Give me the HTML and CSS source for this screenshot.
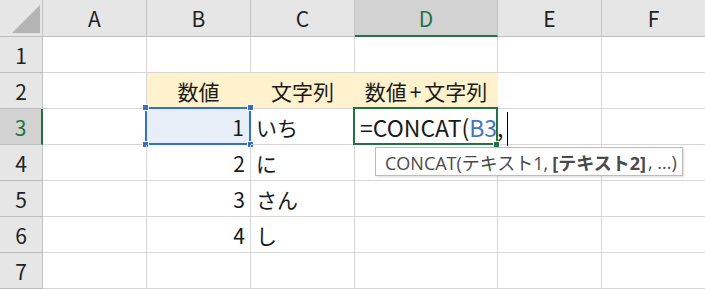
FILE: index.html
```html
<!DOCTYPE html>
<html lang="ja">
<head>
  <meta charset="UTF-8" />
  <title>CONCAT</title>
  <link rel="stylesheet" href="styles.css">
</head>
<body>
  <div class="sheet">
    <div class="corner"><span class="corner-mark"></span></div>
    <div class="col-head">A</div>
    <div class="col-head">B</div>
    <div class="col-head">C</div>
    <div class="col-head active">D</div>
    <div class="col-head">E</div>
    <div class="col-head">F</div>

    <div class="row-head">1</div>
    <div class="cell"></div><div class="cell"></div><div class="cell"></div><div class="cell"></div><div class="cell"></div><div class="cell"></div>

    <div class="row-head">2</div>
    <div class="cell"></div>
    <div class="cell fill center">数値</div>
    <div class="cell fill center">文字列</div>
    <div class="cell fill center">数値<span class="plus">+</span>文字列</div>
    <div class="cell"></div><div class="cell"></div>

    <div class="row-head active">3</div>
    <div class="cell"></div>
    <div class="cell num ref">1<span class="ref-box"><i class="h tl"></i><i class="h tr"></i><i class="h bl"></i><i class="h br"></i></span></div>
    <div class="cell">いち</div>
    <div class="cell editing">
      <span class="formula">=CONCAT(<span class="ref-text">B3</span>,</span><span class="caret"></span>
      <span class="edit-box"><i class="fill-handle"></i></span>
    </div>
    <div class="cell"></div><div class="cell"></div>

    <div class="row-head">4</div>
    <div class="cell"></div><div class="cell num">2</div><div class="cell">に</div><div class="cell"></div><div class="cell"></div><div class="cell"></div>

    <div class="row-head">5</div>
    <div class="cell"></div><div class="cell num">3</div><div class="cell">さん</div><div class="cell"></div><div class="cell"></div><div class="cell"></div>

    <div class="row-head">6</div>
    <div class="cell"></div><div class="cell num">4</div><div class="cell">し</div><div class="cell"></div><div class="cell"></div><div class="cell"></div>

    <div class="row-head">7</div>
    <div class="cell"></div><div class="cell"></div><div class="cell"></div><div class="cell"></div><div class="cell"></div><div class="cell"></div>

    <div class="tip">CONCAT(テキスト1, <b>[テキスト2]</b>, ...)</div>
  </div>
</body>
</html>
```

FILE: styles.css
```css
* {
  margin: 0;
  padding: 0;
  box-sizing: border-box;
}

body {
  width: 705px;
  height: 289px;
  overflow: hidden;
  background: #ffffff;
  font-family: "Noto Sans CJK JP", "Noto Sans", sans-serif;
  color: #1a1a1a;
}

.sheet {
  position: relative;
  display: grid;
  grid-template-columns: 43px 104px 104px 104px 143px 104px 104px;
  grid-template-rows: 37px repeat(7, 36px);
}

.corner,
.col-head,
.row-head {
  background: #e6e6e6;
  border-right: 1px solid #c4c4c4;
  border-bottom: 1px solid #bdbdbd;
  display: flex;
  align-items: center;
  justify-content: center;
  font-size: 21px;
  color: #222;
}

.corner {
  position: relative;
}

.corner-mark {
  position: absolute;
  left: 12px;
  top: 5px;
  width: 28px;
  height: 28px;
  background: #b4b4b4;
  clip-path: polygon(100% 0, 100% 100%, 0 100%);
}

.col-head.active {
  background: #d2d2d2;
  color: #217346;
  border-bottom: 2px solid #217346;
}

.row-head.active {
  background: #d2d2d2;
  color: #217346;
  border-right: 2px solid #217346;
}

.cell {
  position: relative;
  border-right: 1px solid #d6d6d6;
  border-bottom: 1px solid #d6d6d6;
  display: flex;
  align-items: center;
  padding: 0 5px;
  font-size: 21px;
  white-space: nowrap;
}

.cell.center {
  justify-content: center;
}

.cell.num {
  justify-content: flex-end;
}

.cell.fill {
  background: #fff2cc;
  border-right-color: #fff2cc;
}

.plus {
  margin: 0 3px;
}

.cell.ref {
  background: #e8eef8;
  padding-right: 6px;
}

.ref-box {
  position: absolute;
  left: -2px;
  top: -2px;
  right: -1px;
  bottom: -1px;
  border: 2px solid #3370c8;
}

.h {
  position: absolute;
  width: 7px;
  height: 7px;
  background: #3370c8;
  border: 1px solid #ffffff;
}

.h.tl { left: -5px; top: -5px; }
.h.tr { right: -5px; top: -5px; }
.h.bl { left: -5px; bottom: -5px; }
.h.br { right: -5px; bottom: -5px; }

.cell.editing {
  overflow: visible;
  z-index: 2;
  padding-left: 5px;
}

.formula {
  flex-shrink: 0;
  font-size: 23px;
}

.ref-text {
  color: #4472c4;
}

.caret {
  flex-shrink: 0;
  display: block;
  width: 1px;
  height: 34px;
  margin: 4px 0 0 3px;
  background: #000;
}

.edit-box {
  position: absolute;
  left: -2px;
  top: -2px;
  right: -1px;
  bottom: -1px;
  border: 2px solid #217346;
  pointer-events: none;
}

.fill-handle {
  position: absolute;
  right: -4px;
  bottom: -5px;
  width: 7px;
  height: 7px;
  background: #217346;
  border: 1px solid #ffffff;
}

.tip {
  position: absolute;
  left: 375px;
  top: 147px;
  width: 308px;
  height: 29px;
  padding-left: 9px;
  display: flex;
  align-items: center;
  background: #ffffff;
  border: 1px solid #bcbcbc;
  box-shadow: 1px 1px 2px rgba(0, 0, 0, 0.15);
  font-family: "Open Sans", "Noto Sans CJK JP", sans-serif;
  font-size: 18px;
  color: #4a4a4a;
  white-space: nowrap;
  z-index: 3;
}

.tip b {
  font-weight: 700;
  margin: 0 2px 0 4px;
}
```
